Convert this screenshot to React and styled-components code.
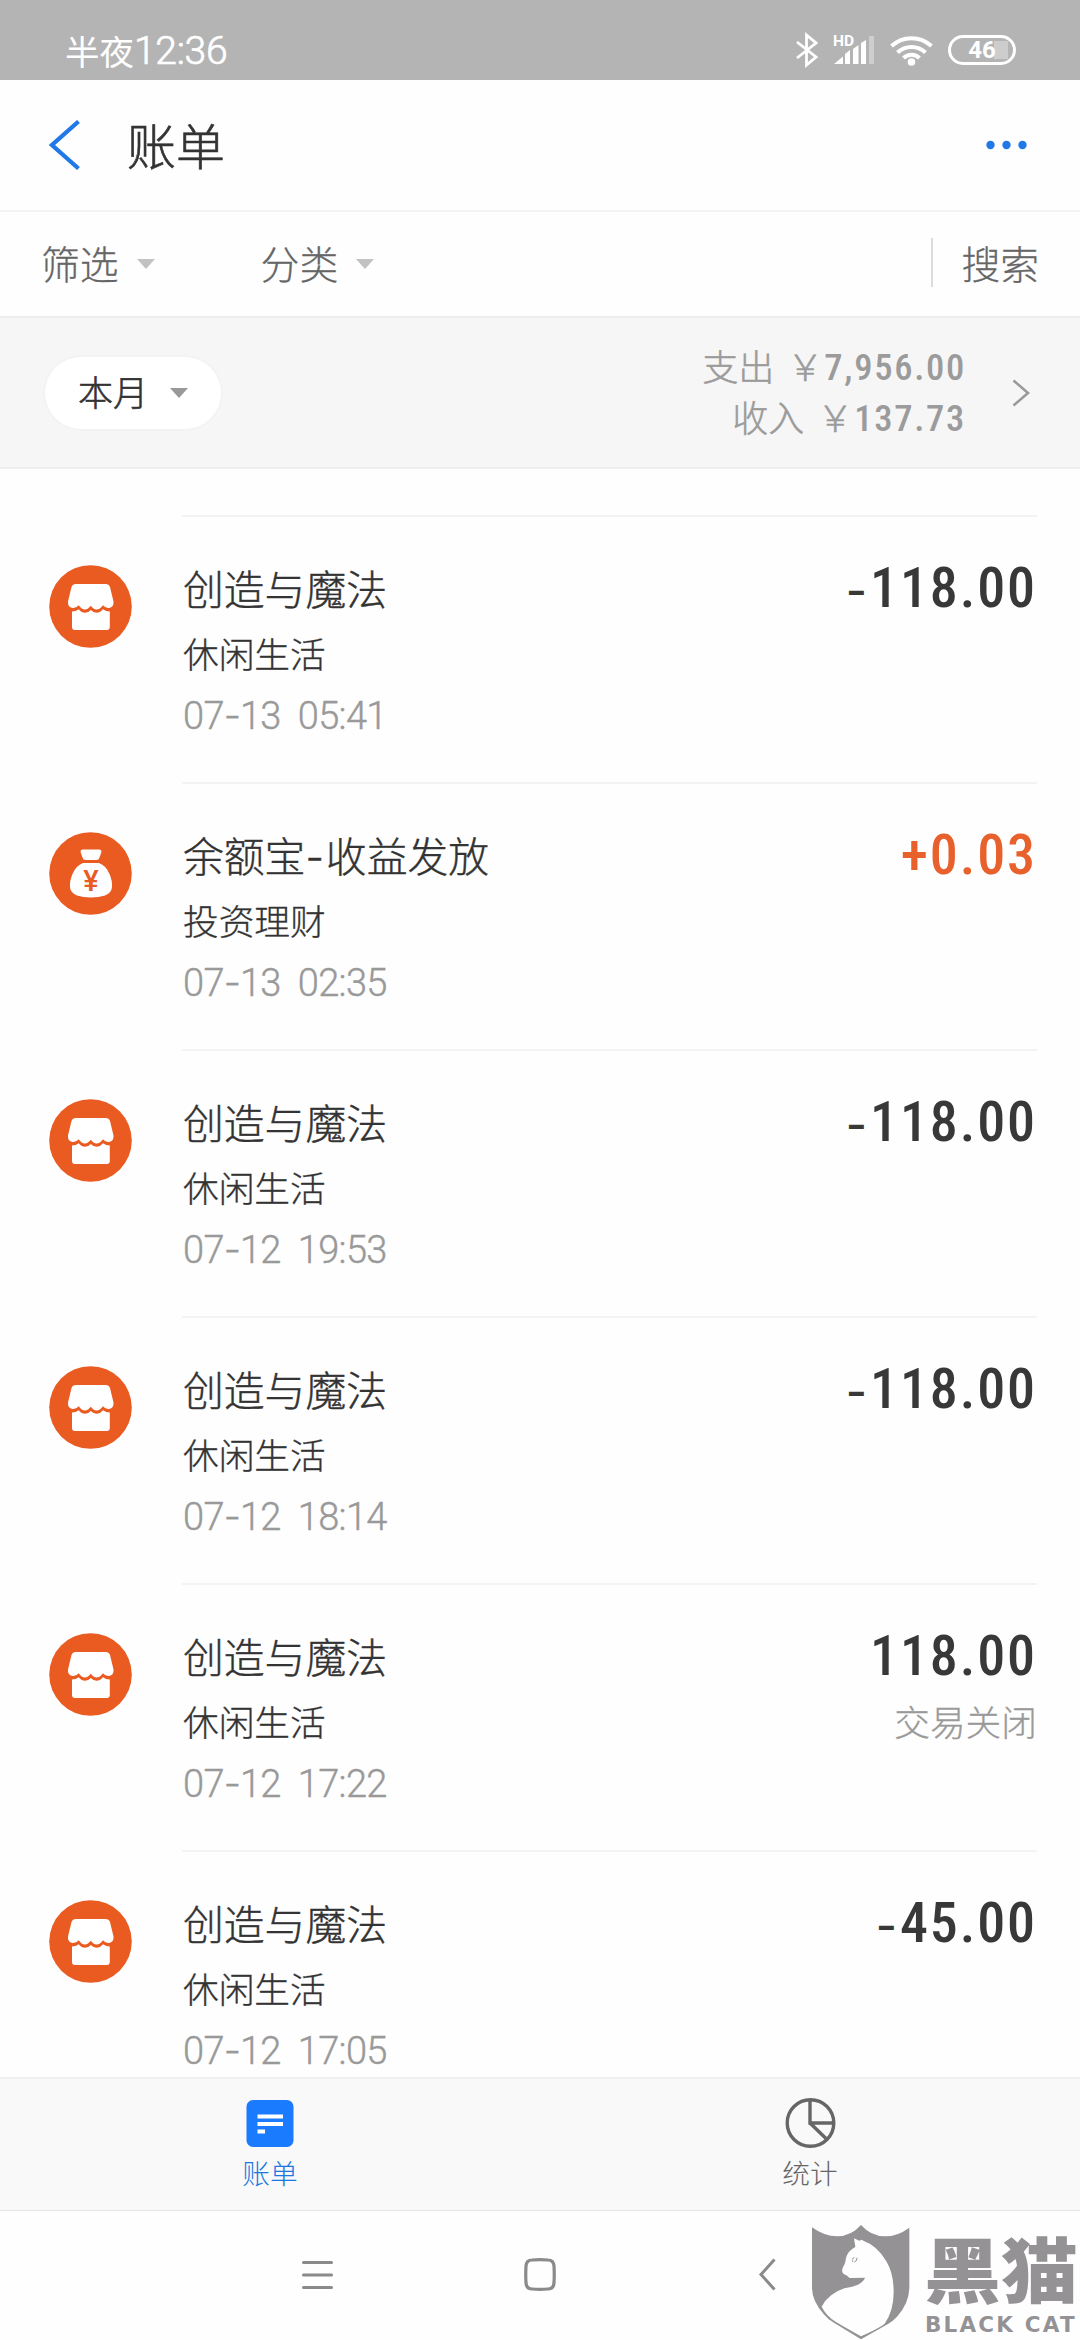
import React from 'react';
import styled, { createGlobalStyle } from 'styled-components';

const CJK = '"Noto Sans CJK SC", sans-serif';
const NUM = 'Roboto, "Noto Sans CJK SC", sans-serif';

const GlobalStyle = createGlobalStyle`
  * { box-sizing: border-box; }
  body { margin: 0; background: #fefefe; font-family: ${CJK}; }
  svg { display: block; flex: none; }
`;

const Screen = styled.div`
  position: relative;
  display: flex;
  flex-direction: column;
  width: 1080px;
  height: 2340px;
  overflow: hidden;
  background: #fefefe;
  color: #333;
  font-weight: 300;
  white-space: pre;
`;

const StatusBar = styled.header`
  display: flex;
  align-items: center;
  flex: none;
  height: 80px;
  padding: 20px 64px 0 65px;
  background: #b4b4b4;
  color: #fff;
`;

const Clock = styled.div`
  flex: 1;
  display: flex;
  align-items: center;
  font-size: 34.5px;
  line-height: 50px;
  font-weight: 400;
`;

const ClockDigits = styled.span`
  font-family: ${NUM};
  font-size: 39px;
  font-weight: 300;
  letter-spacing: -0.3px;
  padding-top: 2px;
  -webkit-text-stroke: 0.7px #fff;
`;

const Signal = styled.div`
  display: flex;
  flex-direction: column;
  width: 42px;
  margin: 0 15px 0 15px;
`;

const Battery = styled.div`
  display: flex;
  align-items: center;
  justify-content: center;
  width: 68px;
  height: 30px;
  margin-left: 15px;
  border: 3px solid #fff;
  border-radius: 15px;
  background: linear-gradient(#cdcdcd, #cdcdcd) 43px 3px / 14px 18px no-repeat;
  font-family: ${NUM};
  font-size: 24px;
  font-weight: 700;
  line-height: 24px;
`;

const TitleBar = styled.div`
  display: flex;
  align-items: center;
  flex: none;
  height: 132px;
  padding: 0 53px 0 49px;
  border-bottom: 2px solid #f3f3f3;
`;

const Title = styled.h1`
  flex: 1;
  margin: 0 0 0 47px;
  padding-bottom: 3px;
  font-size: 49px;
  font-weight: 300;
  line-height: 70px;
  -webkit-text-stroke: 0.6px #333;
`;

const FilterBar = styled.div`
  display: flex;
  align-items: center;
  flex: none;
  height: 106px;
  padding: 0 41px 3px;
  border-bottom: 2px solid #ececec;
  color: #666;
  font-size: 38.8px;
  line-height: 56px;
  -webkit-text-stroke: 0.3px #666;
`;

const FilterLabel = styled.span`
  padding-bottom: 2px;
`;

const Dropdown = styled.div`
  display: flex;
  align-items: center;
  gap: 18px;
  margin-right: ${(p) => p.$after || 0}px;
`;

const Caret = styled.span`
  width: 0;
  height: 0;
  margin-top: ${(p) => p.$drop || 0}px;
  border: 9.5px solid transparent;
  border-top: 10.5px solid ${(p) => p.$color || '#c2c2c2'};
  border-bottom: 0;
`;

const Search = styled.div`
  display: flex;
  align-items: center;
  height: 49px;
  margin-left: auto;
  padding-left: 28px;
  border-left: 2px solid #dcdcdc;
`;

const Summary = styled.section`
  display: flex;
  align-items: center;
  flex: none;
  height: 151px;
  padding: 0 50px 0 45px;
  background: #f6f6f6;
  border-bottom: 2px solid #eee;
`;

const MonthPill = styled.div`
  display: flex;
  align-items: center;
  gap: 22px;
  width: 176px;
  height: 72px;
  padding: 0 0 4px 33px;
  border-radius: 36px;
  background: #fff;
  box-shadow: 0 0 0 2px #f3f3f3;
  font-size: 35px;
  -webkit-text-stroke: 0.6px #333;
`;

const Totals = styled.div`
  margin-left: auto;
  margin-right: 46px;
  color: #9b9b9b;
  text-align: right;
`;

const TotalLine = styled.div`
  display: flex;
  align-items: center;
  justify-content: flex-end;
  height: 51px;
  font-size: 36px;
  -webkit-text-stroke: 0.5px #9b9b9b;
`;

const TotalLabel = styled.span`
  margin-right: ${(p) => p.$gap}px;
  padding-bottom: 4px;
`;

const TotalDigits = styled.span`
  padding-left: 1px;
  font-family: ${NUM};
  font-size: 36.6px;
  font-weight: 500;
  font-stretch: 85%;
  letter-spacing: 1.7px;
  -webkit-text-stroke: 0;
`;

const List = styled.main`
  flex: 1;
  min-height: 0;
  overflow: hidden;
  padding-top: 46px;
`;

const Row = styled.article`
  display: flex;
  height: 267px;
  padding: 0 43px 0 49px;
`;

const RowIcon = styled.div`
  width: 133px;
  padding-top: 50px;
`;

const RowBody = styled.div`
  flex: 1;
  display: flex;
  justify-content: space-between;
  padding-top: 45px;
  padding-left: 1px;
  border-top: 2px solid #f3f3f3;
`;

const Column = styled.div`
  display: flex;
  flex-direction: column;
  align-items: ${(p) => (p.$end ? 'flex-end' : 'flex-start')};
`;

const Name = styled.div`
  font-size: 40.8px;
  line-height: 52px;
  -webkit-text-stroke: 0.4px #333;
`;

const Detail = styled.div`
  margin-top: 17px;
  font-size: 35.7px;
  line-height: 44px;
  color: ${(p) => (p.$muted ? '#999' : '#333')};
  -webkit-text-stroke: 0.3px ${(p) => (p.$muted ? '#999' : '#333')};
`;

const Time = styled.div`
  margin-top: 20px;
  font-family: ${NUM};
  font-size: 38px;
  line-height: 42px;
  letter-spacing: -0.7px;
  color: #999;
  -webkit-text-stroke: 0.4px #999;
`;

const Dash = styled.span`
  font-family: Inter, sans-serif;
  font-size: ${(p) => p.$size || 1}em;
  line-height: 1;
  letter-spacing: ${(p) => p.$gap || 0}px;
`;

const Amount = styled.div`
  font-family: ${NUM};
  font-size: 56px;
  font-weight: 500;
  font-stretch: 85%;
  line-height: 52px;
  letter-spacing: 1.9px;
  color: ${(p) => (p.$income ? '#e8602c' : '#383838')};
`;

const TabBar = styled.nav`
  display: grid;
  grid-template-columns: 1fr 1fr;
  flex: none;
  height: 134px;
  background: #f9f9f9;
  border-top: 2px solid #f0f0f0;
  border-bottom: 1px solid #e4e4e4;
`;

const Tab = styled.div`
  display: flex;
  flex-direction: column;
  align-items: center;
  padding-top: 19px;
  gap: 4px;
  font-size: 27.7px;
  line-height: 40px;
  color: ${(p) => (p.$active ? '#1c76e0' : '#666')};
`;

const SystemNav = styled.footer`
  display: flex;
  align-items: center;
  flex: none;
  height: 129px;
  padding: 0 0 2px 302px;
`;

const NavSlot = styled.div`
  width: ${(p) => p.$width}px;
`;

const Watermark = styled.div`
  position: absolute;
  right: 0;
  bottom: 0;
  display: flex;
  color: #949294;
`;

const WatermarkText = styled.div`
  display: flex;
  flex-direction: column;
  width: 156px;
  margin-left: 14px;
`;

const WatermarkName = styled.div`
  align-self: flex-start;
  margin-top: 6px;
  font-size: 71px;
  font-weight: 900;
  line-height: 74px;
  transform: scaleX(1.085);
  transform-origin: left;
`;

const WatermarkLatin = styled.div`
  margin-top: 10px;
  padding-left: 1px;
  font-family: "DejaVu Sans", sans-serif;
  font-size: 21.5px;
  font-weight: 700;
  line-height: 24px;
  letter-spacing: 2.2px;
`;

const BluetoothIcon = () => (
  <svg width="22" height="36" viewBox="0 0 22 36" fill="none" stroke="#fff" strokeWidth="2.8">
    <path d="M1 10 L20 25 L10.500 33 V3 L20 11 L1 26" strokeLinejoin="miter" />
  </svg>
);

const SignalIcon = () => (
  <svg width="42" height="42" viewBox="0 -5 42 42" fill="#fff">
    <text x="0" y="11.500" fontFamily="Roboto, sans-serif" fontSize="15.500" fontWeight="700">HD</text>
    <path d="M1 30 L10 22.500 V30 Z M12 20 L17 16 V30 H12 Z M20 15 L25.500 11 V30 H20 Z M28 9 L33 6 V30 H28 Z" />
    <path d="M36 2 H41 V30 H36 Z" opacity=".35" />
  </svg>
);

const WifiIcon = () => (
  <svg width="43" height="31" viewBox="0 0 43 31" fill="none" stroke="#fff" strokeWidth="4">
    <path d="M1.500 11 C13 .5 30 .5 41.500 11" />
    <path d="M7.500 17.500 C15.500 10 27.500 10 35.500 17.500" />
    <path d="M13.500 23 C18 18.500 25 18.500 29.500 23" />
    <circle cx="21.500" cy="27" r="3.800" fill="#fff" stroke="none" />
  </svg>
);

const Chevron = ({ w, h, color, stroke, right }) => (
  <svg width={w} height={h} viewBox={`0 0 ${w} ${h}`} fill="none" stroke={color} strokeWidth={stroke}>
    <path d={right ? `M1.500 1.500 L${w - 2} ${h / 2} L1.500 ${h - 1.5}` : `M${w - 1.5} 1.500 L3 ${h / 2} L${w - 1.5} ${h - 1.5}`} />
  </svg>
);

const MoreIcon = () => (
  <svg width="41" height="10" viewBox="0 0 41 10" fill="#2079e6">
    <circle cx="4.500" cy="5" r="4.200" />
    <circle cx="20.500" cy="5" r="4.200" />
    <circle cx="36.500" cy="5" r="4.200" />
  </svg>
);

const ShopIcon = () => (
  <svg width="83" height="83" viewBox="0 0 83 83">
    <circle cx="41.500" cy="41.500" r="41.300" fill="#ea5b22" />
    <path fill="#fff" d="M27 19 H56.500 Q60 19 61 22 L64.500 36.500 Q65 42 60 43 Q56.500 43.500 54 40.300 Q51 44.500 47.500 44.500 Q44.500 44.500 41.800 40.800 Q39 44.500 36 44.500 Q32.500 44.500 29.700 40.300 Q27 43.500 23.500 43 Q18.500 42 19 36.500 L22.500 22 Q23.500 19 27 19 Z" />
    <path fill="#fff" d="M23 46.500 Q27 46.500 29.700 44.300 Q32.500 47.800 36 47.800 Q39.500 47.800 41.800 45 Q44.500 47.800 47.500 47.800 Q51 47.800 54 44.300 Q57 46.500 60.800 46.500 V62 Q60.800 65 57.800 65 H26 Q23 65 23 62 Z" />
  </svg>
);

const MoneyBagIcon = () => (
  <svg width="83" height="83" viewBox="0 0 83 83">
    <circle cx="41.500" cy="41.500" r="41.300" fill="#ea5b22" />
    <path fill="#fff" d="M34 17.500 H50 Q53 17.500 52.300 20.500 L50.500 25.500 Q50 28 47.500 28 H36.500 Q34 28 33.500 25.500 L31.700 20.500 Q31 17.500 34 17.500 Z" />
    <path fill="#fff" d="M34 31 H50 Q57 33.500 60.500 42 Q63.500 49 63 55 Q62.500 61 56 63.500 Q50 65.500 42 65.500 Q34 65.500 28 63.500 Q21.500 61 21 55 Q20.500 49 23.500 42 Q27 33.500 34 31 Z" />
    <text x="42" y="59" textAnchor="middle" fill="#ea5b22" fontFamily="Roboto, sans-serif" fontSize="29" fontWeight="500">¥</text>
  </svg>
);

const BillIcon = () => (
  <svg width="48" height="50" viewBox="0 0 48 50">
    <rect x="0.500" y="2" width="47" height="47" rx="6.500" fill="#1a7bff" />
    <path d="M11.500 18.500 H37 M11.500 26 H37 M11.500 33.500 H19" stroke="#fff" strokeWidth="3.800" />
  </svg>
);

const PieIcon = () => (
  <svg width="51" height="50" viewBox="0 0 51 50" fill="none" stroke="#666" strokeWidth="3.400">
    <circle cx="25.500" cy="25" r="23.300" />
    <path d="M25 2 V25 H48.500 M25 25 L41.500 41" />
  </svg>
);

const MenuIcon = () => (
  <svg width="31" height="30" viewBox="0 0 31 30" stroke="#8a8a8a" strokeWidth="3" strokeLinecap="round">
    <path d="M1.500 2.500 H29.500 M1.500 15 H29.500 M1.500 27.500 H29.500" />
  </svg>
);

const HomeIcon = () => (
  <svg width="32" height="33" viewBox="0 0 32 33" fill="none" stroke="#8a8a8a" strokeWidth="3.200">
    <path d="M8 2 Q16 1.400 24 2 Q29.500 2 30 8 Q30.500 16.500 30 25 Q29.500 31 24 31 Q16 31.600 8 31 Q2.500 31 2 25 Q1.500 16.500 2 8 Q2.500 2 8 2 Z" />
  </svg>
);

const CatShield = () => (
  <svg width="99" height="117" viewBox="60 39 297 351">
    <path fill="#949294" d="M63 52 Q100 79 138 79 Q180 79 210 45 Q240 79 282 79 Q320 79 355 53 V235 Q353 283 318 320 Q306 333 291 342 L210 388 L130 339 Q110 328 98 312 Q64 275 63 235 Z" />
    <path fill="#fefefe" d="M189 85 L205 92 L212 89 L220 94 Q258 107 286 154 Q308 190 308 246 Q308 303 281 341 Q268 352 210 379 Q160 351 135 336 Q105 317 92 290 Q112 251 160 235 Q215 226 222 203 L176 204 Q170 196 157 191 Q151 184 155 174 Q164 161 165 144 Q171 122 193 111 Z" />
    <path d="M198 143 Q198 155 190 156 M183 149 Q183 145 190 143 M185 151 V156" fill="none" stroke="#949294" strokeWidth="3" />
  </svg>
);

const ENTRIES = [
  { name: '创造与魔法', kind: '休闲生活', time: '07-13  05:41', amount: '-118.00' },
  { name: '余额宝-收益发放', kind: '投资理财', time: '07-13  02:35', amount: '+0.03', income: true },
  { name: '创造与魔法', kind: '休闲生活', time: '07-12  19:53', amount: '-118.00' },
  { name: '创造与魔法', kind: '休闲生活', time: '07-12  18:14', amount: '-118.00' },
  { name: '创造与魔法', kind: '休闲生活', time: '07-12  17:22', amount: '118.00', note: '交易关闭' },
  { name: '创造与魔法', kind: '休闲生活', time: '07-12  17:05', amount: '-45.00' },
];

const withDash = (text, gap, size) =>
  text.split('-').map((part, i) => (
    <React.Fragment key={i}>
      {i > 0 && <Dash $gap={gap} $size={size}>-</Dash>}
      {part}
    </React.Fragment>
  ));

const Total = ({ label, value }) => (
  <TotalLine>
    <TotalLabel $gap={13}>{label}</TotalLabel>
    <TotalLabel $gap={0}>￥</TotalLabel>
    <TotalDigits>{value}</TotalDigits>
  </TotalLine>
);

const Entry = ({ name, kind, time, amount, income, note }) => (
  <Row>
    <RowIcon>{income ? <MoneyBagIcon /> : <ShopIcon />}</RowIcon>
    <RowBody>
      <Column>
        <Name>{withDash(name, 2)}</Name>
        <Detail>{kind}</Detail>
        <Time>{withDash(time, -1)}</Time>
      </Column>
      <Column $end>
        <Amount $income={income}>{withDash(amount, 3, 0.82)}</Amount>
        {note && <Detail $muted>{note}</Detail>}
      </Column>
    </RowBody>
  </Row>
);

export default function App() {
  return (
    <>
      <GlobalStyle />
      <Screen>
        <StatusBar>
          <Clock>
            半夜<ClockDigits>12:36</ClockDigits>
          </Clock>
          <BluetoothIcon />
          <Signal>
            <SignalIcon />
          </Signal>
          <WifiIcon />
          <Battery>46</Battery>
        </StatusBar>
        <TitleBar>
          <Chevron w={31} h={50} color="#2079e6" stroke={4.2} />
          <Title>账单</Title>
          <MoreIcon />
        </TitleBar>
        <FilterBar>
          <Dropdown $after={106}>
            <FilterLabel>筛选</FilterLabel>
            <Caret $drop={3} />
          </Dropdown>
          <Dropdown>
            <FilterLabel>分类</FilterLabel>
            <Caret $drop={3} />
          </Dropdown>
          <Search>
            <FilterLabel>搜索</FilterLabel>
          </Search>
        </FilterBar>
        <Summary>
          <MonthPill>
            本月
            <Caret $color="#999" $drop={4} />
          </MonthPill>
          <Totals>
            <Total label="支出" value="7,956.00" />
            <Total label="收入" value="137.73" />
          </Totals>
          <Chevron w={18} h={28} color="#999" stroke={2.6} right />
        </Summary>
        <List>
          {ENTRIES.map((entry) => (
            <Entry key={entry.time} {...entry} />
          ))}
        </List>
        <TabBar>
          <Tab $active>
            <BillIcon />
            账单
          </Tab>
          <Tab>
            <PieIcon />
            统计
          </Tab>
        </TabBar>
        <SystemNav>
          <NavSlot $width={222}>
            <MenuIcon />
          </NavSlot>
          <NavSlot $width={234}>
            <HomeIcon />
          </NavSlot>
          <Chevron w={18} h={33} color="#8a8a8a" stroke={3} />
        </SystemNav>
        <Watermark>
          <CatShield />
          <WatermarkText>
            <WatermarkName>黑猫</WatermarkName>
            <WatermarkLatin>BLACK CAT</WatermarkLatin>
          </WatermarkText>
        </Watermark>
      </Screen>
    </>
  );
}
